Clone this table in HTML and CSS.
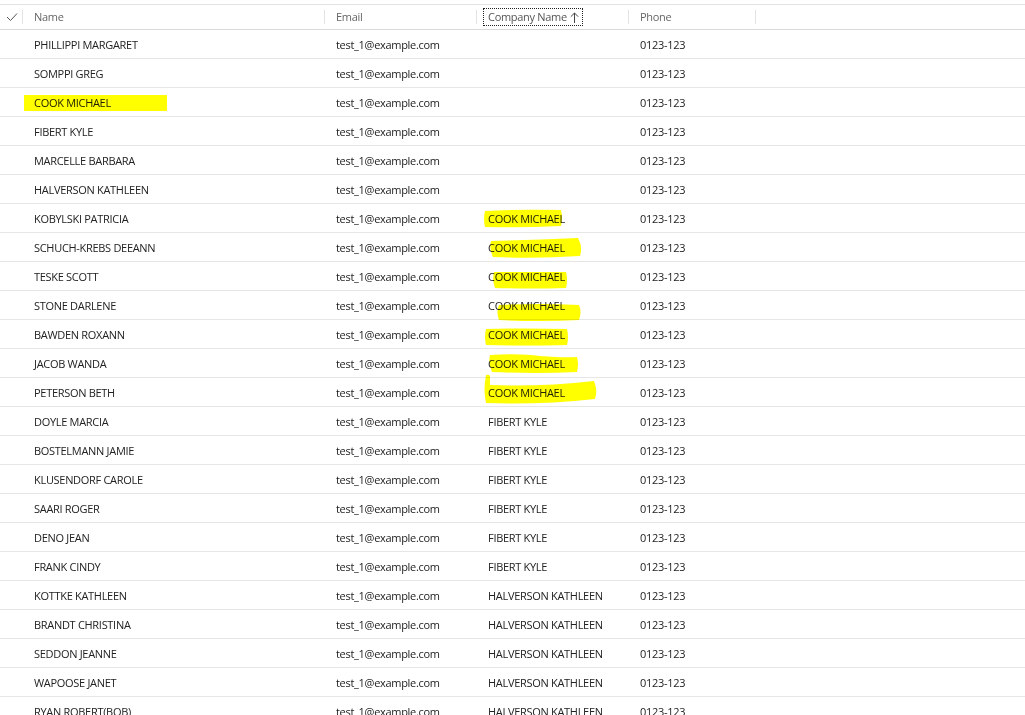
FILE: index.html
```html
<!DOCTYPE html>
<html>
<head>
<meta charset="utf-8">
<link rel="stylesheet" href="styles.css">
</head>
<body>
<div class="grid">
  <div class="head">
    <div class="hcell check"><svg width="12" height="10" viewBox="0 0 12 10"><path d="M1 5 L4.5 8.5 L11 1.5" fill="none" stroke="#555" stroke-width="1"/></svg></div>
    <div class="hcell">Name</div>
    <div class="hcell">Email</div>
    <div class="hcell"><span class="focus">Company Name <svg class="arrow" width="9" height="11" viewBox="0 0 9 11"><path d="M4.5 11 V1 M0.8 4.7 L4.5 1 L8.2 4.7" fill="none" stroke="#444" stroke-width="1"/></svg></span></div>
    <div class="hcell">Phone</div>
    <div class="hcell"></div>
  </div>
  <div class="rows" id="rows"></div>
  <svg class="marks" width="1025" height="715" viewBox="0 0 1025 715">
    <path d="M24 95 L167 95 L167 111 L24 111 Z" />
    <path d="M485 211 Q520 209 561 210 Q563 218 561 226 Q522 228 485 227 Q483 219 485 211 Z" />
    <path d="M491 241 Q530 240 578 238 Q583 247 580 256 Q535 259 493 257 Q489 249 491 241 Z" />
    <path d="M494 272 Q530 272 566 272 Q568 280 566 288 Q530 289 495 288 Q492 280 494 272 Z" />
    <path d="M499 305 Q540 303 579 305 Q582 312 579 320 Q540 322 499 320 Q496 312 499 305 Z" />
    <path d="M486 329 Q526 328 567 329 Q569 337 567 345 Q526 346 486 345 Q484 337 486 329 Z" />
    <path d="M490 355 Q520 353 540 356 Q565 358 577 357 Q579 365 577 372 Q535 374 492 372 Q488 363 490 355 Z" />
    <path d="M486 375 Q489 374 490 376 L490 385 Q540 387 594 381 Q598 391 595 399 Q540 405 486 403 Q483 390 486 375 Z" />
  </svg>
</div>
<script>
var data = [
["PHILLIPPI MARGARET",""],["SOMPPI GREG",""],["COOK MICHAEL",""],["FIBERT KYLE",""],["MARCELLE BARBARA",""],["HALVERSON KATHLEEN",""],
["KOBYLSKI PATRICIA","COOK MICHAEL"],["SCHUCH-KREBS DEEANN","COOK MICHAEL"],["TESKE SCOTT","COOK MICHAEL"],["STONE DARLENE","COOK MICHAEL"],["BAWDEN ROXANN","COOK MICHAEL"],["JACOB WANDA","COOK MICHAEL"],["PETERSON BETH","COOK MICHAEL"],
["DOYLE MARCIA","FIBERT KYLE"],["BOSTELMANN JAMIE","FIBERT KYLE"],["KLUSENDORF CAROLE","FIBERT KYLE"],["SAARI ROGER","FIBERT KYLE"],["DENO JEAN","FIBERT KYLE"],["FRANK CINDY","FIBERT KYLE"],
["KOTTKE KATHLEEN","HALVERSON KATHLEEN"],["BRANDT CHRISTINA","HALVERSON KATHLEEN"],["SEDDON JEANNE","HALVERSON KATHLEEN"],["WAPOOSE JANET","HALVERSON KATHLEEN"],["RYAN ROBERT(BOB)","HALVERSON KATHLEEN"]
];
var html = "";
data.forEach(function(r){
  html += '<div class="row"><div class="cell"></div><div class="cell">'+r[0]+'</div><div class="cell">test_1@example.com</div><div class="cell">'+r[1]+'</div><div class="cell">0123-123</div><div class="cell"></div></div>';
});
document.getElementById("rows").innerHTML = html;
</script>
</body>
</html>
```
FILE: styles.css
```css
html, body {
  margin: 0;
  padding: 0;
  background: #fff;
  overflow: hidden;
  height: 715px;
}
body {
  font-family: "Open Sans", "Noto Sans", "Liberation Sans", sans-serif;
  font-size: 11px;
  letter-spacing: -0.3px;
  color: #222;
}
.grid {
  position: relative;
  padding-top: 4px;
}
.head, .row {
  display: grid;
  grid-template-columns: 22px 302px 152px 152px 127px 1fr;
}
.head {
  border-top: 1px solid #e3e3e3;
  border-bottom: 1px solid #dadada;
  height: 24px;
  align-items: center;
}
.hcell {
  height: 14px;
  line-height: 14px;
  border-left: 1px solid #e3e3e3;
  padding-left: 11px;
  color: #666;
  display: flex;
  align-items: center;
}
.hcell.check {
  border-left: none;
  padding-left: 6px;
}
.focus {
  margin-left: -5px;
  padding: 1px 3px 1px 4px;
  border: 1px dotted #222;
  display: inline-flex;
  align-items: center;
  gap: 3px;
  color: #555;
}
.arrow {
  display: block;
}
.row {
  height: 28px;
  border-bottom: 1px solid #e6e6e6;
  align-items: center;
}
.cell {
  padding-left: 12px;
  white-space: nowrap;
}
.marks {
  position: absolute;
  left: 0;
  top: 0;
  fill: #ffff00;
  mix-blend-mode: multiply;
  pointer-events: none;
}
```
